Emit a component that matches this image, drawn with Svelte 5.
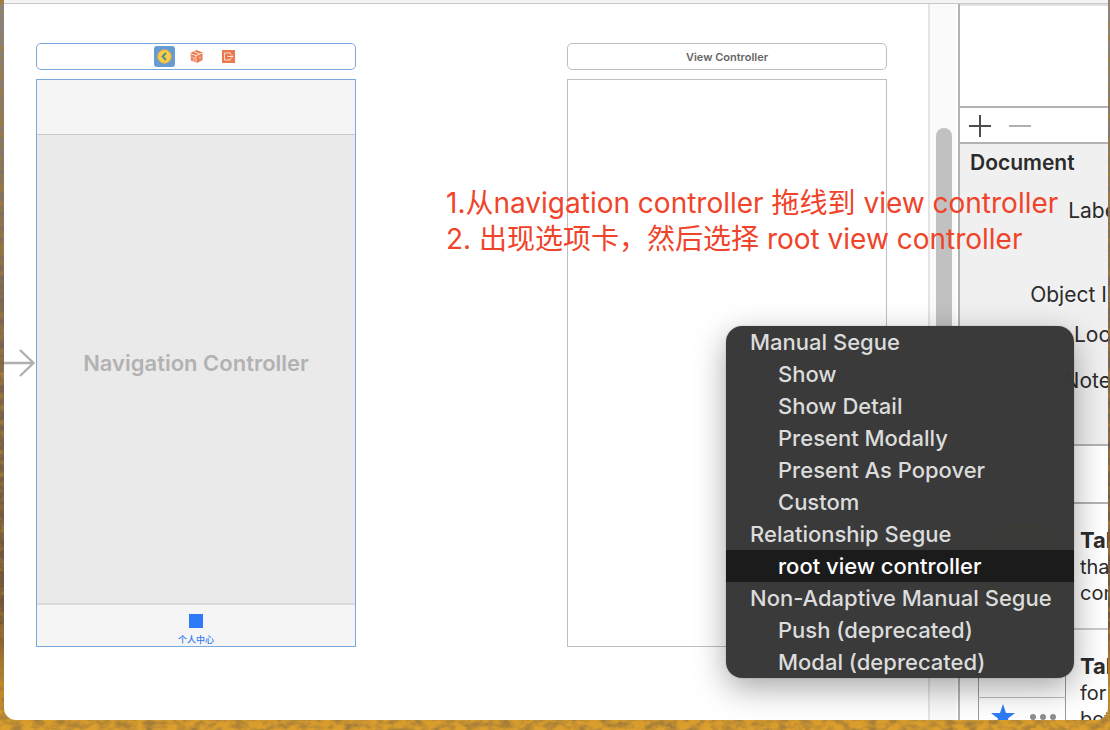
<script lang="ts">
	interface SegueGroup {
		title: string;
		items: string[];
	}

	const groups: SegueGroup[] = [
		{
			title: 'Manual Segue',
			items: ['Show', 'Show Detail', 'Present Modally', 'Present As Popover', 'Custom']
		},
		{ title: 'Relationship Segue', items: ['root view controller'] },
		{ title: 'Non-Adaptive Manual Segue', items: ['Push (deprecated)', 'Modal (deprecated)'] }
	];

	let selected = $state('root view controller');
</script>

<div class="desktop">
	<svg class="wallpaper" aria-hidden="true">
		<filter id="leaves" x="0" y="0" width="100%" height="100%">
			<feTurbulence type="fractalNoise" baseFrequency="0.09 0.14" numOctaves="4" seed="4" />
			<feColorMatrix values="0 0 0 0 0.36  0 0 0 0 0.2  0 0 0 0 0.04  2.4 0 0 0 -0.9" />
		</filter>
		<rect width="100%" height="100%" filter="url(#leaves)" />
	</svg>

	<main class="window">
		<div class="toolbar"></div>
		<div class="panes">
			<section class="canvas">
				<svg class="entry" viewBox="0 0 32 32" aria-hidden="true">
					<path d="M0 16H29M16 3L29.500 16L16 29" fill="none" stroke="#b0b0b0" stroke-width="2.4" />
				</svg>

				<div class="scene active">
					<div class="dock">
						<button aria-label="Navigation Controller">
							<svg viewBox="0 0 21 21">
								<rect width="21" height="21" rx="3" fill="#669bd4" />
								<circle cx="10.5" cy="10.5" r="6.8" fill="#fbcd43" stroke="#d9ae4c" />
								<path d="M12 7L8.5 10.5L12 14" fill="none" stroke="#4c8a9b" stroke-width="1.8" />
							</svg>
						</button>
						<button aria-label="First Responder">
							<svg viewBox="0 0 21 21">
								<path d="M4.5 7L10.5 4L16.5 6.5V14L11 17L5 14.5Z" fill="#e9794f" />
								<path
									d="M4.5 7.8L10 9.5L16.5 7.2M10 9.5V17M8 5.5L13.5 8"
									fill="none"
									stroke="#fff"
									stroke-width="0.8"
								/>
								<path
									d="M6 10.500V12M7.800 11V15.500M14 10.500V13"
									fill="none"
									stroke="#fbdccf"
									stroke-width="0.9"
								/>
							</svg>
						</button>
						<button aria-label="Exit">
							<svg viewBox="0 0 21 21">
								<rect x="4" y="4" width="13" height="13" fill="#e9794f" />
								<path
									d="M12.5 8.5V7H6.500V14H12.5V12.5M9.500 10.5H15M13.200 8.700L15 10.500L13.200 12.300"
									fill="none"
									stroke="#fbdccf"
								/>
							</svg>
						</button>
					</div>
					<div class="device">
						<div class="navbar"></div>
						<div class="placeholder">Navigation Controller</div>
						<div class="tabbar">
							<span class="tab-icon"></span>
							<span class="tab-label">个人中心</span>
						</div>
					</div>
				</div>

				<div class="scene">
					<div class="dock">View Controller</div>
					<div class="device"></div>
				</div>
			</section>

			<div class="scroller"><div class="thumb"></div></div>

			<aside class="inspector">
				<div class="list"></div>
				<div class="actions">
					<button aria-label="Add">
						<svg viewBox="0 0 22 22"><path d="M0 11H22M11 0V22" stroke="#4d4d4d" stroke-width="2" /></svg>
					</button>
					<button aria-label="Remove" disabled>
						<svg viewBox="0 0 22 22"><path d="M0 11H22" stroke="#b0b0b0" stroke-width="2" /></svg>
					</button>
				</div>
				<div class="document">
					<h2>Document</h2>
					<div class="fields">
						<span>Label</span>
						<span>Object ID</span>
						<span>Lock</span>
						<span>Notes</span>
					</div>
				</div>
				<div class="library-tabs"></div>
				<div class="library-item">
					<svg viewBox="0 0 88 88" aria-hidden="true">
						<circle cx="44" cy="44" r="43" fill="#f5c52c" />
						<rect x="20" y="20" width="49" height="48" fill="#fff" stroke="#999" />
					</svg>
					<p><strong>Tab</strong><br />that<br />con</p>
				</div>
				<div class="library-item">
					<svg viewBox="0 0 88 88" aria-hidden="true">
						<rect x="0.5" y="0.5" width="87" height="87" fill="#fff" stroke="#999" />
						<path d="M0 49.5H88" stroke="#bbb" />
						<path
							d="M25 56L28 65H37L30 70.500L32.500 80L25 74L17.500 80L20 70.500L13 65H22Z"
							fill="#2d7bf6"
						/>
						<g fill="#8e8e8e">
							<circle cx="55" cy="69" r="3" />
							<circle cx="65" cy="69" r="3" />
							<circle cx="75" cy="69" r="3" />
						</g>
					</svg>
					<p><strong>Tab</strong><br />for<br />bot</p>
				</div>
			</aside>
		</div>

		<p class="note">
			1.从navigation controller 拖线到 view controller<br />
			2. 出现选项卡，然后选择 root view controller
		</p>

		<div class="menu" role="menu">
			{#each groups as group}
				<div class="group-title">{group.title}</div>
				{#each group.items as item}
					<button
						role="menuitem"
						class:selected={item === selected}
						onmouseenter={() => (selected = item)}
					>
						{item}
					</button>
				{/each}
			{/each}
		</div>
	</main>
</div>

<style>
	:global(body) {
		margin: 0;
	}

	.desktop {
		position: relative;
		display: flex;
		box-sizing: border-box;
		height: 100vh;
		padding: 0 2px 10px 4px;
		overflow: hidden;
		background: linear-gradient(#8a8582, #7d6a5c 35%, #6e5238 85%, #c48a26 94%, #dda02e);
		font-family: Inter, 'Noto Sans CJK SC', sans-serif;
	}

	.wallpaper {
		position: absolute;
		inset: 0;
		width: 100%;
		height: 100%;
	}

	.window {
		position: relative;
		display: flex;
		flex: 1;
		flex-direction: column;
		min-width: 0;
		overflow: hidden;
		border-radius: 0 0 12px 12px;
		background: #fff;
	}

	button {
		padding: 0;
		border: 0;
		background: none;
		font: inherit;
	}

	svg {
		display: block;
	}

	.toolbar {
		flex: none;
		height: 3px;
		border-bottom: 1px solid #c8c8c8;
		background: #f4f4f4;
	}

	.panes {
		display: flex;
		flex: 1;
		min-height: 0;
	}

	.canvas {
		position: relative;
		display: flex;
		flex: 1;
		gap: 211px;
		min-width: 0;
		padding: 39px 32px;
	}

	.entry {
		position: absolute;
		top: 343px;
		left: 0;
		width: 32px;
		height: 32px;
	}

	.scene {
		--line: #bfbfbf;
		flex: none;
		width: 320px;
	}

	.scene.active {
		--line: #7ca9dc;
	}

	.dock {
		display: flex;
		align-items: center;
		justify-content: center;
		gap: 11px;
		box-sizing: border-box;
		height: 27px;
		margin-bottom: 9px;
		border: 1px solid var(--line);
		border-radius: 5px;
		color: #666;
		font-size: 11px;
		font-weight: 600;
	}

	.dock svg {
		width: 21px;
		height: 21px;
	}

	.device {
		display: flex;
		flex-direction: column;
		box-sizing: border-box;
		height: 568px;
		border: 1px solid var(--line);
	}

	.navbar {
		height: 54px;
		border-bottom: 1px solid #cbcbcb;
		background: #f5f5f5;
	}

	.placeholder {
		display: flex;
		flex: 1;
		align-items: center;
		justify-content: center;
		padding-bottom: 12px;
		background: #eaeaea;
		color: #b2b2b2;
		font-size: 22px;
		font-weight: 600;
	}

	.tabbar {
		display: flex;
		flex-direction: column;
		align-items: center;
		gap: 6px;
		box-sizing: border-box;
		height: 43px;
		padding-top: 9px;
		border-top: 2px solid #dadada;
		background: #f5f5f5;
	}

	.tab-icon {
		flex: none;
		width: 14px;
		height: 14px;
		background: #2d7bf6;
	}

	.tab-label {
		color: #2d7bf6;
		font-size: 9px;
		font-weight: 500;
		line-height: 12px;
	}

	.scroller {
		box-sizing: border-box;
		flex: none;
		width: 30px;
		padding: 124px 6px 0;
		border-right: 2px solid #fff;
		border-left: 2px solid #e4e4e4;
		background: #fafafa;
	}

	.thumb {
		width: 16px;
		height: 400px;
		border-radius: 8px;
		background: #c1c1c1;
	}

	.inspector {
		display: flex;
		flex: none;
		flex-direction: column;
		box-sizing: border-box;
		width: 150px;
		overflow: hidden;
		border-left: 2px solid #b3b3b3;
		color: #2b2b2b;
		font-size: 20px;
	}

	.inspector > * {
		box-sizing: border-box;
		flex: none;
		border-bottom: 2px solid #b3b3b3;
	}

	.list {
		height: 104px;
		border-top: 2px solid #e2e2e2;
	}

	.actions {
		display: flex;
		align-items: center;
		gap: 18px;
		height: 36px;
		padding: 2px 0 0 9px;
	}

	.actions svg {
		width: 22px;
		height: 22px;
	}

	.document {
		height: 302px;
		background: #f0f0f0;
	}

	h2 {
		margin: 6px 0 0 10px;
		font-size: 21px;
		font-weight: 600;
		line-height: 26px;
	}

	.fields {
		display: grid;
		grid-template-rows: 84px 40px 46px 26px;
		width: 162px;
		padding-top: 22px;
		font-size: 21px;
		line-height: 26px;
		text-align: right;
	}

	.library-tabs {
		height: 58px;
	}

	.library-item {
		display: flex;
		align-items: center;
		gap: 14px;
		height: 126px;
		padding-left: 18px;
		border-color: #cbcbcb;
	}

	.library-item svg {
		flex: none;
		width: 88px;
		height: 88px;
	}

	.library-item p {
		margin: 0;
		line-height: 26px;
		white-space: nowrap;
	}

	.library-item strong {
		font-size: 22px;
	}

	.note {
		position: absolute;
		top: 185px;
		left: 442px;
		margin: 0;
		color: #f0442a;
		font-size: 28px;
		line-height: 36px;
		white-space: nowrap;
	}

	.menu {
		position: absolute;
		top: 326px;
		left: 722px;
		display: flex;
		flex-direction: column;
		width: 348px;
		overflow: hidden;
		border-radius: 16px;
		background: rgba(56, 56, 56, 0.99);
		box-shadow:
			0 0 1px rgba(0, 0, 0, 0.5),
			0 10px 32px rgba(0, 0, 0, 0.35);
		color: #dcdcdc;
		font-size: 22px;
		font-weight: 500;
		line-height: 32px;
	}

	.group-title {
		padding-left: 24px;
	}

	.menu button {
		padding-left: 52px;
		color: inherit;
		text-align: left;
	}

	.menu button.selected {
		background: #1b1b1b;
		color: #fff;
	}
</style>
